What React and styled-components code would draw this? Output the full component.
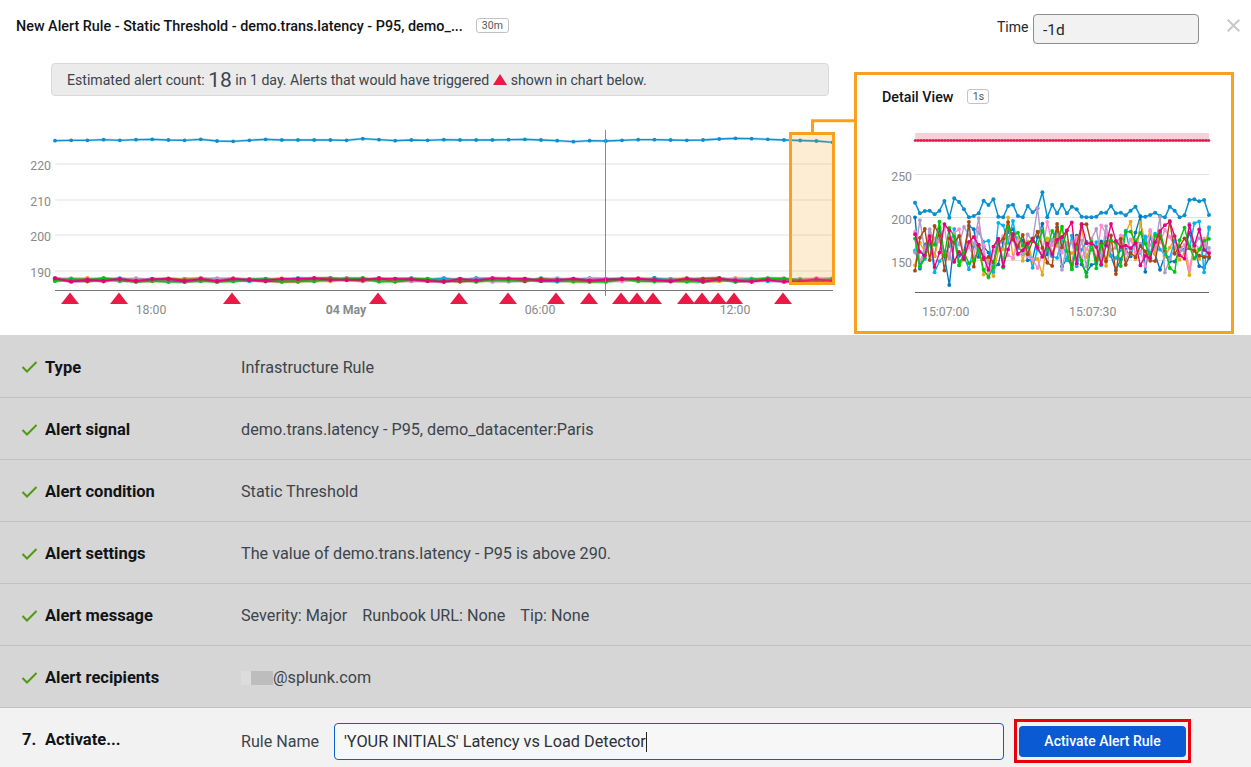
import React from "react";
import styled, { createGlobalStyle } from "styled-components";

const FONT = `Roboto, "Liberation Sans", sans-serif`;

const GlobalStyle = createGlobalStyle`
  html, body {
    margin: 0;
    padding: 0;
    background: #fff;
    overflow: hidden;
  }
  body {
    font-family: ${FONT};
    color: #3c444d;
  }
`;

const Page = styled.div`
  width: 1251px;
  height: 767px;
  display: flex;
  flex-direction: column;
`;

const Top = styled.div`
  display: flex;
  height: 335px;
  flex: none;
`;

const LeftCol = styled.div`
  width: 854px;
  flex: none;
  display: flex;
  flex-direction: column;
`;

const RightCol = styled.div`
  flex: 1;
  display: flex;
  flex-direction: column;
`;

const TitleRow = styled.div`
  height: 63px;
  flex: none;
  display: flex;
  align-items: flex-start;
  padding: 18px 0 0 16px;
  box-sizing: border-box;
  gap: 13px;
`;

const Title = styled.div`
  font-size: 14.36px;
  font-weight: 500;
  line-height: 17px;
  color: #101418;
  white-space: nowrap;
`;

const Badge = styled.span`
  display: inline-flex;
  align-items: center;
  justify-content: center;
  box-sizing: border-box;
  height: 15px;
  min-width: ${({ $w }) => $w}px;
  border: 1px solid #c3c3c3;
  border-radius: 3px;
  font-size: 10.5px;
  color: #555;
`;

const Banner = styled.div`
  margin-left: 51px;
  width: 778px;
  height: 33px;
  flex: none;
  box-sizing: border-box;
  padding-left: 15px;
  display: flex;
  align-items: center;
  background: #ebebeb;
  border: 1px solid #d9d9d9;
  border-radius: 4px;
  font-size: 14.1px;
  white-space: pre;
`;

const Count = styled.span`
  font-size: 21px;
  font-weight: 400;
  line-height: 20px;
`;

const BannerTriangle = styled.svg`
  margin: 0 4px 0 0;
  flex: none;
`;

const ChartSvg = styled.svg`
  display: block;
  flex: none;
`;

const AxisLabel = styled.text`
  font-family: ${FONT};
  font-size: 12.3px;
  fill: #8a8a8a;
  font-weight: ${({ $bold }) => ($bold ? 700 : 400)};
`;

const TimeRow = styled.div`
  height: 72px;
  flex: none;
  display: flex;
  align-items: flex-start;
  padding: 14px 0 0 143px;
  box-sizing: border-box;
`;

const TimeLabel = styled.span`
  font-size: 14px;
  line-height: 26px;
  color: #22282e;
  width: 36px;
`;

const TimeInput = styled.input`
  width: 166px;
  height: 30px;
  box-sizing: border-box;
  padding: 2px 9px 0;
  background: #f2f2f2;
  border: 1px solid #8f8f8f;
  border-radius: 4px;
  font-family: ${FONT};
  font-size: 15.5px;
  color: #22282e;
  outline: none;
`;

const CloseIcon = styled.svg`
  margin: 5px 0 0 28px;
  flex: none;
`;

const DetailPanel = styled.div`
  width: 380px;
  height: 262px;
  box-sizing: border-box;
  border: 3px solid #f9a11f;
  display: flex;
  flex-direction: column;
`;

const DetailHeader = styled.div`
  height: 43px;
  flex: none;
  box-sizing: border-box;
  padding: 14px 0 0 25px;
  display: flex;
  gap: 14px;
  align-items: flex-start;
`;

const DetailTitle = styled.div`
  font-size: 14.3px;
  font-weight: 500;
  line-height: 16px;
  color: #101418;
`;

const Rows = styled.div`
  flex: 1;
  display: flex;
  flex-direction: column;
`;

const Row = styled.div`
  height: 62px;
  flex: none;
  box-sizing: border-box;
  padding-top: 2px;
  display: flex;
  align-items: center;
  background: #d6d6d6;
  border-bottom: 1px solid #c2c2c2;

  &:first-child {
    height: 63px;
  }
`;

const Check = styled.svg`
  margin-left: 21px;
  width: 17px;
  flex: none;
`;

const RowLabel = styled.div`
  width: 196px;
  margin-left: 7px;
  flex: none;
  font-size: 16.5px;
  font-weight: 700;
  color: #101418;
`;

const RowValue = styled.div`
  display: flex;
  gap: 15px;
  font-size: 16.2px;
  color: #3c444d;
`;

const Redacted = styled.span`
  display: inline-block;
  width: 32px;
  height: 14px;
  background: linear-gradient(to right, #dcdcdc 0 10px, #bdbdbd 10px);
`;

const Email = styled.span`
  display: flex;
  align-items: center;
`;

const Footer = styled.div`
  flex: 1;
  display: flex;
  align-items: center;
  padding-top: 3px;
  background: #f2f2f2;
`;

const StepNumber = styled.span`
  width: 23px;
  margin-left: 22px;
  flex: none;
  font-size: 16.5px;
  font-weight: 700;
  color: #101418;
`;

const StepLabel = styled.span`
  width: 196px;
  flex: none;
  font-size: 16.5px;
  font-weight: 700;
  color: #101418;
`;

const RuleLabel = styled.span`
  width: 93px;
  flex: none;
  padding-top: 4px;
  font-size: 16.1px;
`;

const RuleInput = styled.div`
  width: 670px;
  height: 37px;
  flex: none;
  margin-top: 5px;
  box-sizing: border-box;
  padding-left: 9px;
  display: flex;
  align-items: center;
  background: #f7f7f7;
  border: 1px solid #0a5fd0;
  border-radius: 4px;
  font-size: 16.3px;
  color: #2b3138;
  white-space: pre;
`;

const Caret = styled.span`
  display: inline-block;
  width: 1px;
  height: 20px;
  background: #222;
`;

const Outline = styled.div`
  margin: 4px 0 0 10px;
  width: 177px;
  height: 44px;
  box-sizing: border-box;
  border: 3px solid #e8000f;
  display: flex;
  align-items: center;
  justify-content: center;
`;

const ActivateButton = styled.button`
  width: 167px;
  height: 31px;
  border: none;
  border-radius: 4px;
  background: #0a5ad4;
  color: #fff;
  font-family: ${FONT};
  font-size: 14px;
  font-weight: 500;
`;

// small seeded random, so the noise in the charts stays the same between runs
function makeRandom(seed) {
  let s = seed;
  return () => {
    s = (s + 0x6d2b79f5) | 0;
    let t = Math.imul(s ^ (s >>> 15), 1 | s);
    t = (t + Math.imul(t ^ (t >>> 7), 61 | t)) ^ t;
    return ((t ^ (t >>> 14)) >>> 0) / 4294967296;
  };
}

const SERIES_COLORS = ["#0077c2", "#e6a817", "#00b2f0", "#ff8ad0", "#ae9cc6", "#a8480f", "#00c60f", "#e6007e"];

const MAIN_BLUE = [
  140.7, 140.3, 140.3, 139.7, 140.3, 139.7, 139.3, 140, 140.3, 139.3, 141, 141.3, 140.3, 139.3, 140, 140, 140, 140,
  140.3, 138.7, 139.7, 140.7, 140, 140.3, 139.7, 140, 140, 140, 139.7, 139.3, 140, 140.7, 141.7, 140.7, 141, 140.3,
  139.7, 139.7, 140, 140.3, 140, 139, 138.3, 138.7, 139.3, 140, 140.5, 141, 142.3,
];

const DETAIL_BLUE = [
  68, 100, 93, 92, 103, 92, 63, 113, 55, 66, 88, 112, 108, 100, 62, 75, 58, 110, 112, 78, 74, 108, 112, 78, 97, 85,
  37, 112, 74, 100, 74, 100, 80, 88, 110, 112, 112, 110, 98, 98, 78, 100, 98, 106, 92, 80, 110, 110, 105, 98, 108,
  112, 80, 92, 112, 106, 60, 58, 64, 60, 105,
];

const MAIN_STEP = 16.2;
const DETAIL_STEP = 4.9;

const mainBlue = MAIN_BLUE.map((y, i) => [55 + i * MAIN_STEP, y]);
const detailBlue = DETAIL_BLUE.map((y, i) => [Math.min(915 + i * DETAIL_STEP, 1209), 180 + y / 3]);

const mainBundle = SERIES_COLORS.map((color, c) => {
  const rand = makeRandom(101 + c * 17);
  return {
    color,
    points: MAIN_BLUE.map((_, i) => [55 + i * MAIN_STEP, 280 + (rand() - 0.5) * 3.6]),
  };
});

const detailBundle = SERIES_COLORS.map((color, c) => {
  const rand = makeRandom(7 + c * 31);
  return {
    color,
    points: DETAIL_BLUE.map((_, i) => {
      const noise = (rand() + rand() - 1) * 32;
      return [Math.min(915 + i * DETAIL_STEP, 1209), 247 + noise];
    }),
  };
});

// the few outliers that stand clear of the noise
detailBundle[0].points[7][1] = 285;
detailBundle[4].points[25][1] = 208;
detailBundle[6].points[15][1] = 277;
detailBundle[5].points[41][1] = 274;

const TRIANGLES = [70, 119, 232, 378, 459, 508, 556, 589, 621, 637, 653, 686, 702, 718, 734, 783];

const ROWS = [
  { label: "Type", values: ["Infrastructure Rule"] },
  { label: "Alert signal", values: ["demo.trans.latency - P95, demo_datacenter:Paris"] },
  { label: "Alert condition", values: ["Static Threshold"] },
  { label: "Alert settings", values: ["The value of demo.trans.latency - P95 is above 290."] },
  { label: "Alert message", values: ["Severity: Major", "Runbook URL: None", "Tip: None"] },
];

function Series({ points, color, r, width, halo }) {
  const line = points.map((p) => p.join(",")).join(" ");
  return (
    <g>
      {halo && <polyline points={line} fill="none" stroke={color} strokeWidth={halo} strokeOpacity="0.3" />}
      <polyline points={line} fill="none" stroke={color} strokeWidth={width} strokeLinejoin="round" />
      {points.map(([x, y], i) => (
        <circle key={i} cx={x} cy={y} r={r} fill={color} />
      ))}
    </g>
  );
}

function CheckMark() {
  return (
    <Check height="12" viewBox="0 0 17 12">
      <path d="M1.5 6 L6 10.5 L15.5 1" fill="none" stroke="#4f9a10" strokeWidth="2" />
    </Check>
  );
}

function MainChart() {
  return (
    <ChartSvg width="854" height="239" viewBox="0 96 854 239">
      {[
        [220, 164],
        [210, 200],
        [200, 235],
        [190, 271],
      ].map(([value, y]) => (
        <g key={value}>
          <line x1="55" x2="833" y1={y} y2={y} stroke="#e1e1e1" />
          <AxisLabel x="51" y={y + 6} textAnchor="end">
            {value}
          </AxisLabel>
        </g>
      ))}
      <Series points={mainBlue} color="#0a8fce" r={1.9} width={1.3} halo={2.6} />
      {mainBundle.map((s) => (
        <Series key={s.color} points={s.points} color={s.color} r={2.1} width={1.5} halo={3.5} />
      ))}
      <line x1="55" x2="833" y1="290.5" y2="290.5" stroke="#777" />
      <line x1="605.5" x2="605.5" y1="130" y2="296" stroke="#8a8a8a" />
      {TRIANGLES.map((x) => (
        <polygon key={x} points={`${x - 9},304 ${x},292.5 ${x + 9},304`} fill="#ea1a47" />
      ))}
      <AxisLabel x="151" y="314" textAnchor="middle">
        18:00
      </AxisLabel>
      <AxisLabel x="346" y="314" textAnchor="middle" $bold>
        04 May
      </AxisLabel>
      <AxisLabel x="540" y="314" textAnchor="middle">
        06:00
      </AxisLabel>
      <AxisLabel x="735" y="314" textAnchor="middle">
        12:00
      </AxisLabel>
      <rect x="790.5" y="133.5" width="43" height="150" fill="rgba(245,166,35,0.2)" stroke="#f9a11f" strokeWidth="3" />
      <path d="M812.5 133 V120.8 H854" fill="none" stroke="#f9a11f" strokeWidth="3" />
    </ChartSvg>
  );
}

function DetailChart() {
  const threshold = [];
  for (let x = 915; x <= 1209; x += 3) threshold.push([x, 140.5]);
  return (
    <ChartSvg width="374" height="213" viewBox="857 118 374 213">
      <rect x="915" y="133" width="294" height="7" fill="#f8d0d8" />
      <Series points={threshold} color="#e8174d" r={1.3} width={1.8} />
      {[
        [250, 174.5],
        [200, 217.5],
        [150, 260.5],
      ].map(([value, y]) => (
        <g key={value}>
          <line x1="915" x2="1209" y1={y} y2={y} stroke="#e1e1e1" />
          <AxisLabel x="912" y={y + 6} textAnchor="end">
            {value}
          </AxisLabel>
        </g>
      ))}
      <Series points={detailBlue} color="#0a8fce" r={2} width={1.5} />
      {detailBundle.map((s) => (
        <Series key={s.color} points={s.points} color={s.color} r={1.9} width={1.4} />
      ))}
      <line x1="915" x2="1209" y1="292.5" y2="292.5" stroke="#666" />
      <AxisLabel x="922" y="316">
        15:07:00
      </AxisLabel>
      <AxisLabel x="1069" y="316">
        15:07:30
      </AxisLabel>
    </ChartSvg>
  );
}

export default function App() {
  return (
    <Page>
      <GlobalStyle />
      <Top>
        <LeftCol>
          <TitleRow>
            <Title>New Alert Rule - Static Threshold - demo.trans.latency - P95, demo_...</Title>
            <Badge $w={33}>30m</Badge>
          </TitleRow>
          <Banner>
            Estimated alert count: <Count>18</Count> in 1 day. Alerts that would have triggered{" "}
            <BannerTriangle width="14" height="11" viewBox="0 0 14 11">
              <polygon points="0,11 7,0 14,11" fill="#ea1a47" />
            </BannerTriangle>
            shown in chart below.
          </Banner>
          <MainChart />
        </LeftCol>
        <RightCol>
          <TimeRow>
            <TimeLabel>Time</TimeLabel>
            <TimeInput readOnly value="-1d" />
            <CloseIcon width="13" height="13" viewBox="0 0 13 13">
              <path d="M0.7 0.7 L12.3 12.3 M12.3 0.7 L0.7 12.3" stroke="#c8c8c8" strokeWidth="2" />
            </CloseIcon>
          </TimeRow>
          <DetailPanel>
            <DetailHeader>
              <DetailTitle>Detail View</DetailTitle>
              <Badge $w={22}>1s</Badge>
            </DetailHeader>
            <DetailChart />
          </DetailPanel>
        </RightCol>
      </Top>
      <Rows>
        {ROWS.map((row) => (
          <Row key={row.label}>
            <CheckMark />
            <RowLabel>{row.label}</RowLabel>
            <RowValue>
              {row.values.map((v) => (
                <span key={v}>{v}</span>
              ))}
            </RowValue>
          </Row>
        ))}
        <Row>
          <CheckMark />
          <RowLabel>Alert recipients</RowLabel>
          <RowValue>
            <Email>
              <Redacted />
              @splunk.com
            </Email>
          </RowValue>
        </Row>
        <Footer>
          <StepNumber>7.</StepNumber>
          <StepLabel>Activate...</StepLabel>
          <RuleLabel>Rule Name</RuleLabel>
          <RuleInput>
            'YOUR INITIALS' Latency vs Load Detector
            <Caret />
          </RuleInput>
          <Outline>
            <ActivateButton>Activate Alert Rule</ActivateButton>
          </Outline>
        </Footer>
      </Rows>
    </Page>
  );
}
